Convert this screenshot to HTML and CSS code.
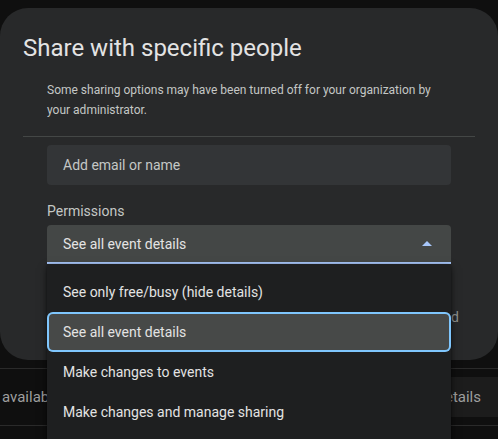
FILE: index.html
```html
<!DOCTYPE html>
<html lang="en">
<head>
  <meta charset="UTF-8" />
  <title>Share with specific people</title>
  <link rel="stylesheet" href="styles.css">
</head>
<body>

<!-- page behind the dialog -->
<div class="page">
  <div class="page-row">
    <span class="row-text">availability</span>
    <span class="row-button">See all event details</span>
  </div>
</div>

<div class="dialog">
  <h1 class="title">Share with specific people</h1>
  <p class="notice">Some sharing options may have been turned off for your organization by your administrator.</p>
  <div class="divider"></div>

  <div class="field">
    <div class="input">Add email or name</div>

    <div class="label">Permissions</div>
    <div class="select-wrap">
      <div class="select">
        <span>See all event details</span>
        <span class="caret"></span>
      </div>

      <ul class="menu">
        <li class="menu-item">See only free/busy (hide details)</li>
        <li class="menu-item active">See all event details</li>
        <li class="menu-item">Make changes to events</li>
        <li class="menu-item">Make changes and manage sharing</li>
      </ul>
    </div>
  </div>

  <div class="hint">People you add will be notified</div>
</div>

</body>
</html>
```

FILE: styles.css
```css
body {
  margin: 0;
  height: 439px;
  overflow: hidden;
  background-color: #0f0f0f;
  font-family: Roboto, "Liberation Sans", sans-serif;
  color: #e3e3e3;
  position: relative;
}

/* Page behind the scrim */
.page {
  padding-top: 368px;
}
.page-row {
  display: flex;
  justify-content: space-between;
  align-items: center;
  height: 56px;
  border-top: 1px solid #2a2a2a;
  border-bottom: 1px solid #2a2a2a;
  font-size: 15px;
  color: #9e9e9e;
}
.row-text {
  padding-left: 2px;
}
.row-button {
  background-color: #1c1c1c;
  height: 40px;
  line-height: 40px;
  padding: 0 17px 0 20px;
}

/* Dialog */
.dialog {
  position: absolute;
  top: 8px;
  left: 0;
  width: 498px;
  height: 352px;
  box-sizing: border-box;
  padding: 24px 23px 0;
  background-color: #28292a;
  border-radius: 28px;
}
.title {
  margin: 0;
  font-size: 24px;
  font-weight: 400;
  line-height: 32px;
  color: #e3e3e3;
}
.notice {
  margin: 16px 24px 0;
  font-size: 12px;
  line-height: 20px;
  color: #c4c7c5;
}
.divider {
  margin-top: 16px;
  border-top: 1px solid #444746;
}
.field {
  margin: 8px 24px 0;
}
.input {
  height: 40px;
  line-height: 40px;
  padding: 0 16px;
  background-color: #333537;
  border-radius: 4px;
  font-size: 14px;
  color: #c4c7c5;
}
.label {
  margin-top: 16px;
  font-size: 14px;
  line-height: 20px;
  color: #c4c7c5;
}
.select-wrap {
  margin-top: 4px;
  position: relative;
}
.select {
  display: flex;
  justify-content: space-between;
  align-items: center;
  height: 37px;
  padding: 0 19px 0 16px;
  background-color: #444746;
  border-radius: 4px 4px 0 0;
  border-bottom: 2px solid #a8c7fa;
  font-size: 14px;
  color: #e3e3e3;
}
.caret {
  width: 0;
  height: 0;
  border-left: 5px solid transparent;
  border-right: 5px solid transparent;
  border-bottom: 5px solid #a8c7fa;
}

/* Open dropdown */
.menu {
  position: absolute;
  top: 39px;
  left: 0;
  right: 0;
  margin: 0;
  padding: 8px 0;
  list-style: none;
  background-color: #1e1f20;
  box-shadow: 0 4px 8px rgba(0,0,0,0.5), 0 1px 3px rgba(0,0,0,0.4);
  z-index: 10;
}
.menu-item {
  height: 40px;
  line-height: 40px;
  padding: 0 16px;
  font-size: 14px;
  color: #e3e3e3;
}
.menu-item.active {
  background-color: #474948;
  border-radius: 6px;
  box-shadow: inset 0 0 0 2px #7fc6fd;
}

.hint {
  margin: 43px 16px 0 0;
  text-align: right;
  font-size: 14px;
  line-height: 20px;
  color: #8e918f;
}
```
